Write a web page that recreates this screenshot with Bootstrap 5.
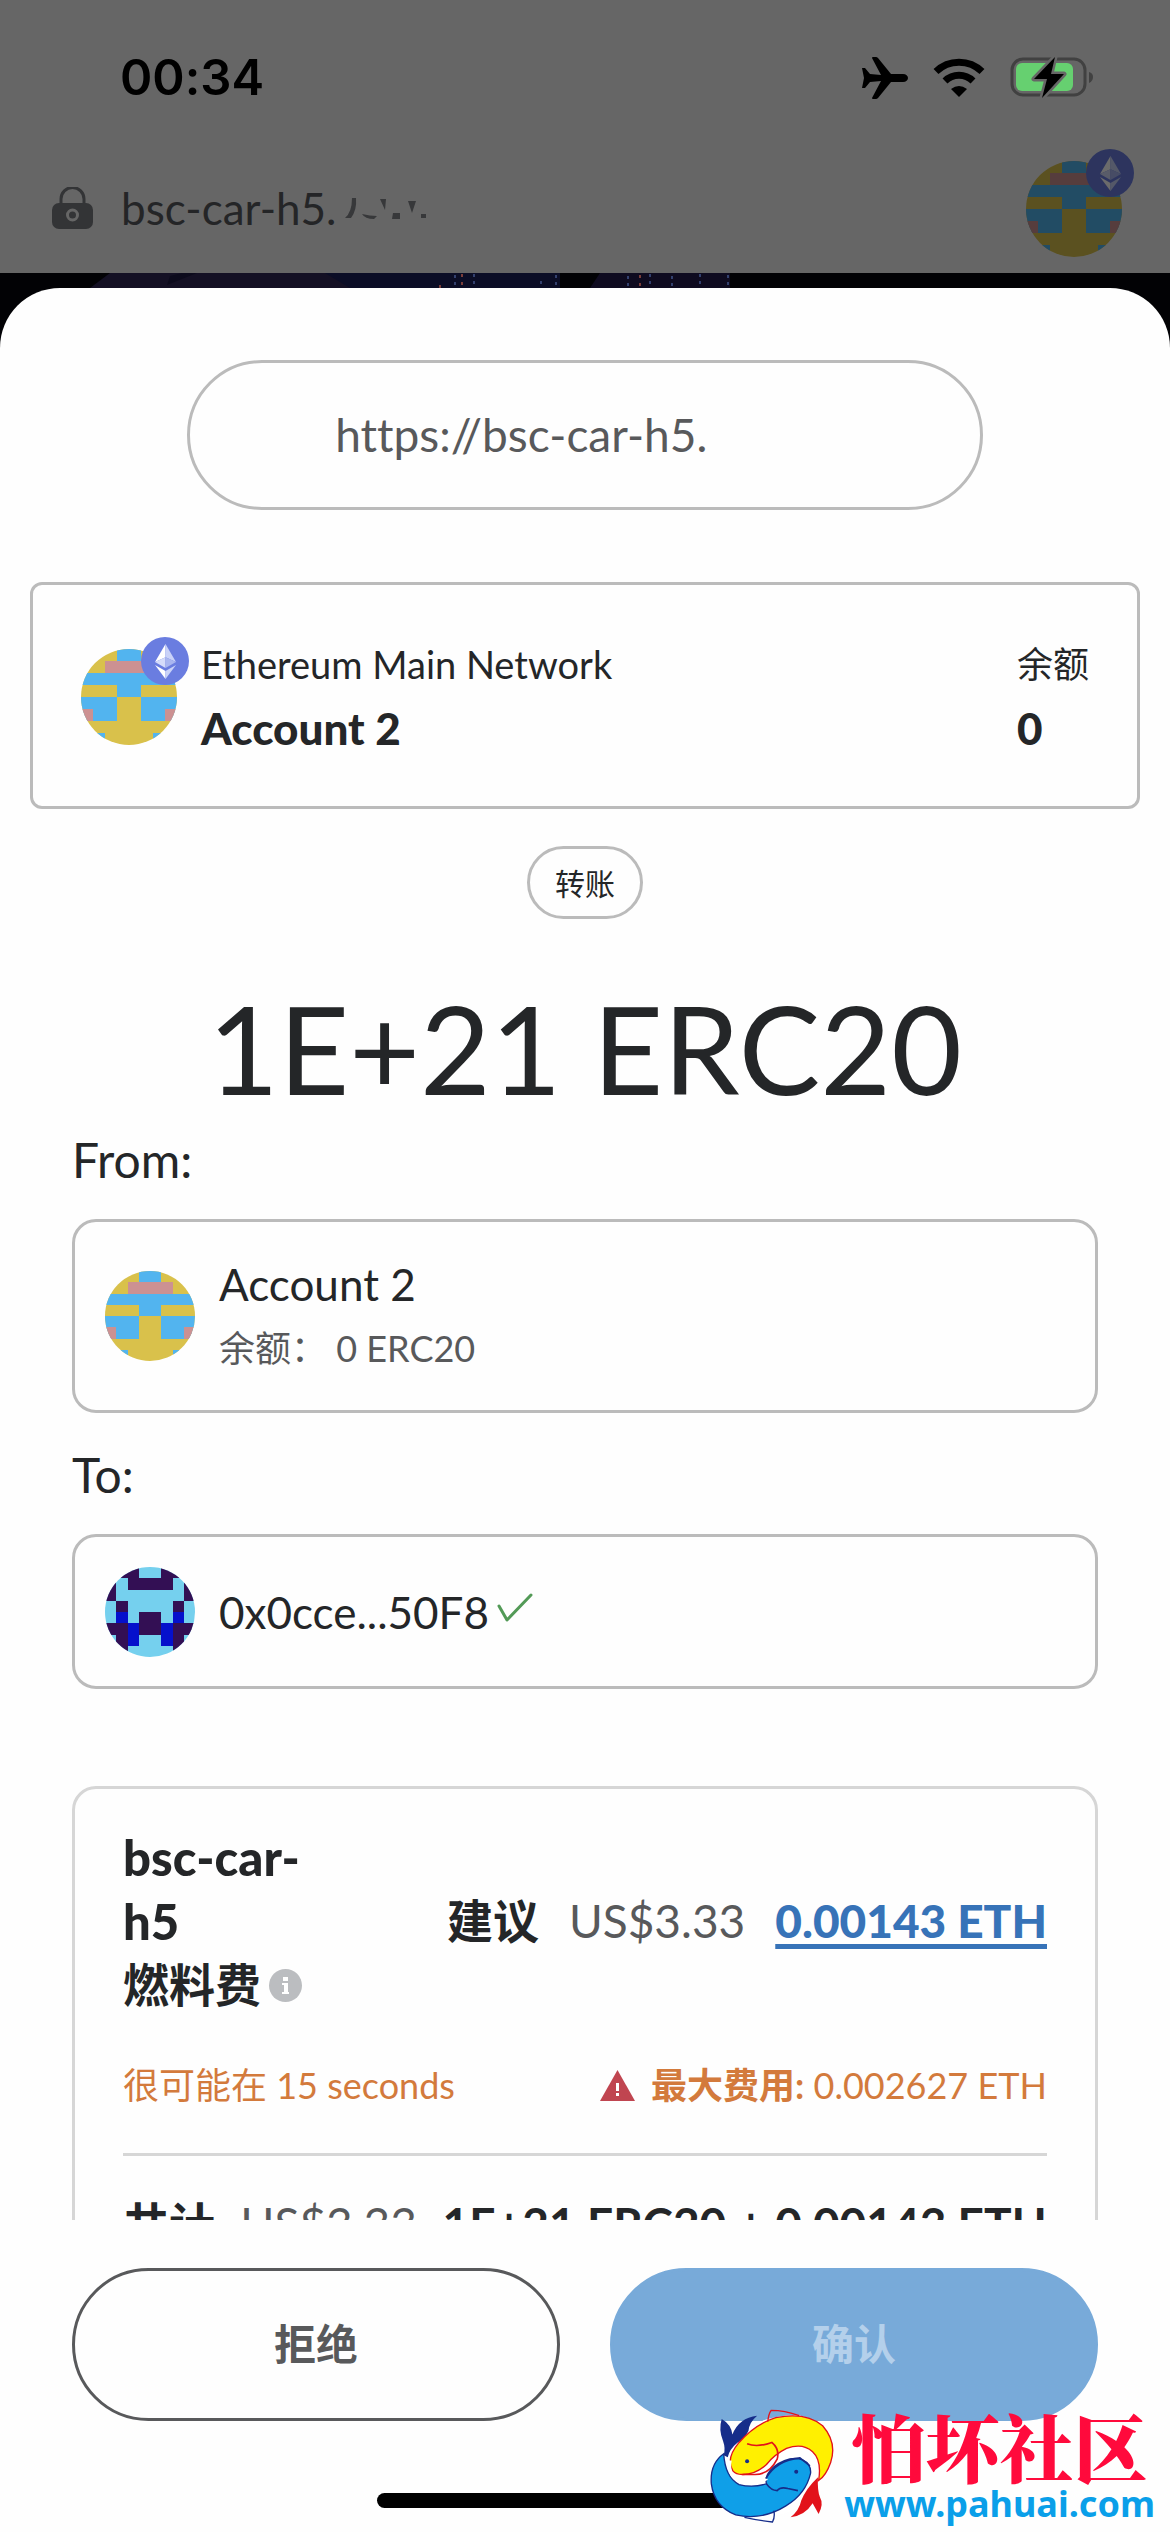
<!DOCTYPE html>
<html lang="zh-CN">
<head>
<meta charset="utf-8">
<meta name="viewport" content="width=device-width, initial-scale=1">
<title>转账确认</title>
<link rel="stylesheet" href="https://cdn.jsdelivr.net/npm/bootstrap@5.3.0/dist/css/bootstrap.min.css">
<style>
  body { font-family: Lato, "Noto Sans CJK SC", sans-serif; color: #242628; background: #000; font-size: 36px; line-height: 54px; font-variant-ligatures: none; }
  .app-shell { height: 100vh; overflow: hidden; background: #020205; }
  .top-area { background: #666; height: 273px; }
  .status-row { height: 156px; padding: 0 76px 0 120px; }
  .clock { font-family: Inter, sans-serif; font-weight: 600; font-size: 49px; color: #000; }
  .address-row { height: 104px; padding: 0 36px 0 52px; }
  .site-name { font-size: 44px; color: #242527; }
  .dimmed { filter: brightness(.42); }
  .address-row .avatar-wrap { margin-bottom: 10px; }
  .art-strip { height: 15px; }
  .sheet { background: #fefefe; border-radius: 60px 60px 0 0; min-height: 0; }
  .sheet-scroll { min-height: 0; overflow: hidden; padding-top: 72px; }
  .origin-pill { width: 68%; height: 150px; border: 3px solid #bbb; border-radius: 75px; padding-left: 145px; font-size: 46px; color: #58595b; }
  .network-card { margin: 72px 30px 0; height: 227px; border: 3px solid #bbb; border-radius: 12px; padding: 0 48px; gap: 12px; }
  .network-card .avatar-wrap { margin-bottom: 10px; }
  .network-name { font-size: 38px; }
  .avatar-wrap { width: 108px; height: 108px; }
  .avatar-wrap .face { position: absolute; left: 0; bottom: 0; }
  .avatar-wrap .coin { position: absolute; right: 0; top: 0; }
  .line-tall { line-height: 64px; }
  .strong-line { font-size: 44px; font-weight: 900; }
  .kind-tag { margin-top: 37px; height: 73px; border: 3px solid #bbb; border-radius: 37px; padding: 0 25px; font-size: 30px; }
  .amount { font-size: 122px; line-height: 162px; margin-top: 48px; }
  .side { padding: 0 72px; }
  .side-label { font-size: 48px; line-height: 62px; }
  .party { border: 3px solid #bbb; border-radius: 24px; padding: 0 30px; gap: 24px; margin-top: 28px; margin-bottom: 31px; }
  .party-from { height: 194px; }
  .party-to { height: 155px; }
  .party-name { font-size: 44px; }
  .soft { color: #58595b; }
  .fee-card { margin-top: 97px; border: 3px solid #d6d6d6; border-radius: 24px; padding: 37px 48px 48px; font-size: 46px; line-height: 62px; }
  .fee-card b { font-weight: 900; }
  .fee-site { width: 200px; }
  .fee-host { font-size: 49px; }
  .fee-values { gap: 30px; }
  .fee-link { color: #3773b8; font-weight: 900; text-decoration-thickness: 5px; text-underline-offset: 6px; }
  .gas-note { font-size: 36px; line-height: 54px; color: #d37a3c; margin-top: 42px; }
  .fee-rule { border-top: 3px solid #d6d6d6; margin: 41px 0 37px; }
  .actions { padding: 48px 72px 72px; gap: 50px; }
  .action-btn { height: 153px; border-radius: 77px; border-width: 3px; font-size: 42px; font-weight: 700; }
  .btn-reject { border-color: #58595b; color: #58595b; }
  .btn-confirm, .btn-confirm:disabled { background: #78aad9; border-color: #78aad9; color: #b4d0eb; opacity: 1; }
  .home-bar { width: 417px; height: 15px; border-radius: 8px; background: #000; margin-bottom: 24px; }
  .stamp { position: absolute; right: 15px; bottom: 8px; }
  .stamp-title { font-size: 74px; line-height: 78px; font-weight: 900; color: #ff0a3c; font-family: "Noto Serif CJK SC", "Noto Sans CJK SC", serif; }
  .stamp-link { font-family: "Noto Sans", sans-serif; font-weight: 700; font-size: 36px; line-height: 40px; color: #0a9fe9; }
</style>
<script src="https://cdn.jsdelivr.net/npm/bootstrap@5.3.0/dist/js/bootstrap.bundle.min.js"></script>
</head>
<body>
<svg class="d-none" aria-hidden="true">
  <symbol id="face-a" viewBox="0 0 8 8">
    <g shape-rendering="crispEdges">
      <path fill="#d9c14b" d="M0 0h8v8H0z"/>
      <path fill="#52b4ef" d="M3 0h2v1H3zM0 2h8v1H5v1H3V3H0zM0 4h3v2H0zM5 4h3v2H5zM0 7h2v1H0zM6 7h2v1H6z"/>
      <path fill="#cc9192" d="M2 1h4v1H2zM0 5h1v1H0zM7 5h1v1H7z"/>
    </g>
  </symbol>
  <symbol id="face-b" viewBox="0 0 8 8">
    <g shape-rendering="crispEdges">
      <path fill="#75d0ee" d="M0 0h8v8H0z"/>
      <path fill="#330f54" d="M0 0h3v1H0zM5 0h3v1H5zM0 1h1v2H0zM7 1h1v2H7zM2 1h4v1H2zM1 3h1v1H1zM6 3h1v1H6zM3 4h2v2H3zM0 5h2v1H0zM6 5h2v1H6zM1 6h1v2H1zM6 6h1v2H6z"/>
      <path fill="#0510cc" d="M1 4h1v1H1zM6 4h1v1H6zM2 5h1v2H2zM5 5h1v2H5z"/>
    </g>
  </symbol>
  <symbol id="coin" viewBox="0 0 48 48">
    <circle cx="24" cy="24" r="24" fill="#6a7de0"/>
    <path fill="#fff" d="M24.500 7L14 25l10.500-4.700z"/><path fill="#c9d2f8" d="M24.500 7L35 25l-10.500-4.700z"/>
    <path fill="#d5dcfa" d="M14 25l10.500-4.700V31z"/><path fill="#a9b6f0" d="M35 25l-10.500-4.700V31z"/>
    <path fill="#fff" d="M14 28l10.500 6v8z"/><path fill="#c9d2f8" d="M35 28l-10.500 6v8z"/>
  </symbol>
</svg>

<main class="app-shell d-flex flex-column position-relative">
  <header class="top-area flex-shrink-0">
    <div class="status-row d-flex align-items-center justify-content-between">
      <span class="clock">00:34</span>
      <div class="d-flex align-items-center">
        <svg width="46" height="42" viewBox="0 0 46 42"><path d="M0 11h3l5 6 11 1L10 1q0-1 1-1h3q1 0 2 1l13 16h12c3 0 5 2 5 4s-2 4-5 4H29L16 41q-1 1-2 1h-3q-1 0-1-1l9-17-11 1-5 6H0l2-10z"/></svg>
        <svg class="ms-4" width="54" height="40" viewBox="0 0 54 40"><g fill="none" stroke="#000" stroke-width="7"><path d="M4 13.500a33 33 0 0 1 46 0"/><path d="M13 23a20 20 0 0 1 28 0"/></g><path d="M19 31q8-6 16 0l-8 8z"/></svg>
        <svg class="ms-4" width="84" height="44" viewBox="0 0 84 44"><rect x="2" y="3" width="73" height="36" rx="11" fill="none" stroke="#414141" stroke-width="3"/><rect x="6" y="7" width="57" height="28" rx="6" fill="#66d070"/><path d="M79 16q4 1 4 5t-4 6z" fill="#414141"/><path d="M45 1L24 23h13l-5 19 22-24H41z" stroke="#666" stroke-width="5" stroke-linejoin="round"/><path d="M45 1L24 23h13l-5 19 22-24H41z"/></svg>
      </div>
    </div>
    <div class="address-row d-flex align-items-center">
      <svg width="41" height="42" viewBox="0 0 41 42"><path d="M9 18V12a11 11 0 0 1 23 0v6" fill="none" stroke="#333436" stroke-width="3"/><rect y="16" width="41" height="26" rx="7" fill="#333436"/><circle cx="20.500" cy="28" r="5" fill="none" stroke="#666" stroke-width="3"/></svg>
      <span class="site-name ms-4 ps-1">bsc-car-h5.</span>
      <svg class="flex-shrink-0" width="100" height="24" viewBox="0 0 90 24"><path fill="#37383a" d="M10 2h4q1 12-5 20H3q7-6 7-20zM20 18q8 2 15 2l-3 3q-9 0-12-5zM38 3h6l-1 11zM51 17h7v6h-8zM66 5h8l-4 12-3-9zM79 18h5v4h-5z"/></svg>
      <div class="avatar-wrap dimmed position-relative ms-auto">
        <svg class="face rounded-circle" width="96" height="96"><use href="#face-a"/></svg>
        <svg class="coin" width="48" height="48"><use href="#coin"/></svg>
      </div>
    </div>
  </header>
  <svg class="art-strip flex-shrink-0 w-100" viewBox="0 0 1170 15" preserveAspectRatio="none">
    <path fill="#141024" d="M110 0h340l30 15H90z"/><path fill="#0c0a1c" d="M170 3l12-3h15l-30 12z"/><path fill="#0b0d26" d="M325 0h235v15H350z"/>
    <path fill="#0f0b20" d="M600 0h130v15H590z"/><path stroke="#33406e" stroke-width="2" stroke-dasharray="3 4" d="M455 2v13M474 1v14M628 3v12M650 1v13M672 3v12M700 1v13M728 2v13M541 8v7M556 2v13"/><path stroke="#7a3d3a" stroke-width="2" stroke-dasharray="3 5" d="M462 1v14M640 2v12M440 12v3"/>
  </svg>

  <section class="sheet d-flex flex-column flex-grow-1 position-relative">
    <div class="sheet-scroll flex-grow-1">
      <div class="origin-pill d-flex align-items-center mx-auto">https://bsc-car-h5.</div>

      <div class="network-card d-flex align-items-center">
        <div class="avatar-wrap position-relative flex-shrink-0">
          <svg class="face rounded-circle" width="96" height="96"><use href="#face-a"/></svg>
          <svg class="coin" width="48" height="48"><use href="#coin"/></svg>
        </div>
        <div class="line-tall flex-grow-1">
          <div class="network-name">Ethereum Main Network</div>
          <div class="strong-line">Account 2</div>
        </div>
        <div class="line-tall">
          <div>余额</div>
          <div class="strong-line">0</div>
        </div>
      </div>

      <div class="d-flex justify-content-center">
        <span class="kind-tag d-flex align-items-center">转账</span>
      </div>

      <h1 class="amount text-center fw-normal mb-0">1E+21 ERC20</h1>

      <div class="side">
        <div class="side-label">From:</div>
        <div class="party party-from d-flex align-items-center">
          <svg class="rounded-circle" width="90" height="90"><use href="#face-a"/></svg>
          <div>
            <div class="party-name line-tall">Account 2</div>
            <div class="soft line-tall">余额： 0 ERC20</div>
          </div>
        </div>
        <div class="side-label">To:</div>
        <div class="party party-to d-flex align-items-center mb-0">
          <svg class="rounded-circle" width="90" height="90"><use href="#face-b"/></svg>
          <div class="party-name d-flex align-items-center">0x0cce...50F8
            <svg class="ms-2 mb-2" width="36" height="30" viewBox="0 0 36 30"><path d="M2 13l8 14L34 2" fill="none" stroke="#539a57" stroke-width="3" stroke-linecap="round" stroke-linejoin="round"/></svg>
          </div>
        </div>

        <div class="fee-card">
          <div class="d-flex align-items-center justify-content-between">
            <div class="fee-site"><b class="fee-host">bsc-car-<br>h5</b><br><span class="fw-bold d-flex align-items-center">燃料费
              <svg class="ms-2" width="33" height="33" viewBox="0 0 33 33"><circle cx="16.500" cy="16.500" r="16.500" fill="#bbbdc0"/><path fill="#fff" d="M14 8h5v4h-5zM13 14h6v9h1v2h-7v-2h2v-7h-2z"/></svg></span>
            </div>
            <div class="fee-values d-flex align-items-baseline">
              <span class="fw-bold">建议</span>
              <span class="soft">US$3.33</span>
              <a class="fee-link" href="#">0.00143 ETH</a>
            </div>
          </div>
          <div class="gas-note d-flex justify-content-between">
            <span>很可能在 15 seconds</span>
            <span class="d-flex align-items-center">
              <svg class="me-3" width="35" height="31" viewBox="0 0 35 31"><path fill="#c04550" d="M17.500 0L35 31H0z"/><path fill="#fff" d="M16 13h3v8h-3zM16 23h3v3h-3z"/></svg>
              <span><span class="fw-bold">最大费用:</span> 0.002627 ETH</span>
            </span>
          </div>
          <div class="fee-rule"></div>
          <div class="d-flex justify-content-between text-nowrap">
            <span class="fw-bold">共计</span><span class="soft">US$3.33</span><span class="fw-bold">1E+21 ERC20 + 0.00143 ETH</span>
          </div>
        </div>
      </div>
    </div>

    <div class="actions d-flex flex-shrink-0">
      <button type="button" class="btn action-btn btn-reject flex-fill w-50">拒绝</button>
      <button type="button" class="btn action-btn btn-confirm flex-fill w-50" disabled>确认</button>
    </div>
    <div class="home-bar mx-auto flex-shrink-0"></div>
  </section>

  <div class="stamp d-flex align-items-center">
    <svg class="me-2" width="127" height="117" viewBox="60 70 380 350">
      <path fill="#fff" d="M120 180Q200 90 330 95Q430 120 430 210Q420 270 390 290Q350 370 280 390Q180 420 110 370Q60 310 70 270Q80 220 120 180z"/>
      <path fill="#162d8a" d="M98 106q28 16 32 46q20-50 74-56q-24 20-26 46q-12 24-34 36q-22 18-28 42l-12-6q6-20-2-42q-14-34-4-66z"/>
      <path fill="#0f9fe8" stroke="#162d8a" stroke-width="4" d="M104 210Q62 240 67 300Q76 368 140 393Q220 410 290 366Q350 330 364 268Q366 240 340 228Q300 214 252 250Q226 274 232 300Q190 312 150 302Q108 280 104 210z"/>
      <path fill="#fff000" stroke="#e2121a" stroke-width="4" d="M132 262Q108 226 150 176Q200 120 260 102Q350 84 400 126Q444 176 424 236Q410 276 388 290Q398 230 370 204Q340 176 292 194Q256 212 232 242Q200 272 160 272Q140 272 132 262z"/>
      <path fill="none" stroke="#fff" stroke-width="8" d="M124 230q-10 50 34 66q40 10 76-12"/>
      <path fill="none" stroke="#e2121a" stroke-width="5" d="M174 180q30 12 74-4q24 20 16 50q-24 46-66 46h-38"/>
      <path fill="none" stroke="#e2121a" stroke-width="4" d="M236 114q2-24 10-34q40 0 84 16"/>
      <path fill="none" stroke="#162d8a" stroke-width="5" d="M232 300q14 20 32 20q10-12 32-6l30 6M230 284q30-54 102-62l30 24"/>
      <path fill="none" stroke="#162d8a" stroke-width="4" d="M166 400q46 10 84 14q8-14 4-34"/>
      <path fill="#e2121a" d="M386 280q-2 40 6 60q12 20-4 50l-18-32q-22 36-66 42q26-20 32-50q14-36 50-70z"/>
      <circle cx="174" cy="232" r="6" fill="#162d8a"/><circle cx="321" cy="264" r="6" fill="#162d8a"/>
    </svg>
    <div class="text-center">
      <div class="stamp-title">怕坏社区</div>
      <div class="stamp-link">www.pahuai.com</div>
    </div>
  </div>
</main>
</body>
</html>
